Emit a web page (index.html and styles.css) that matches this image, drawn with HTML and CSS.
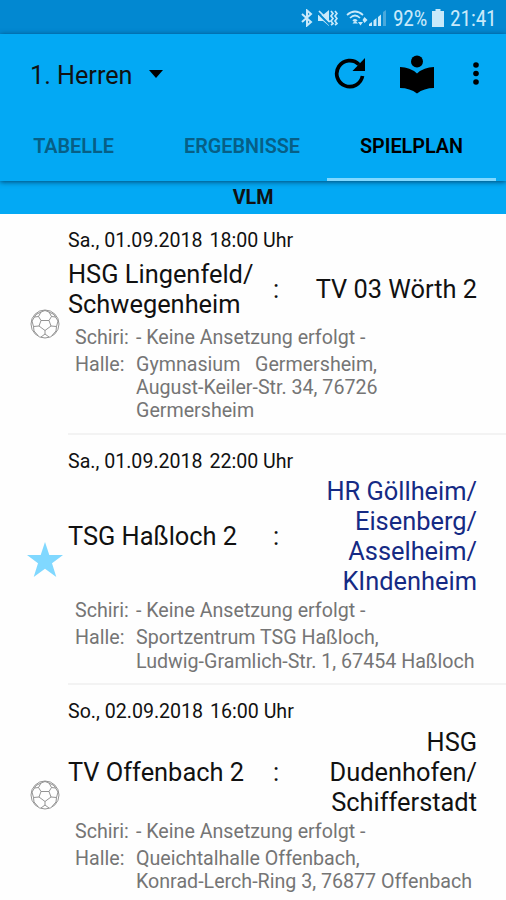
FILE: index.html
```html
<!DOCTYPE html>
<html lang="de">
<head>
  <meta charset="UTF-8" />
  <meta name="viewport" content="width=device-width, initial-scale=1.0" />
  <title>Spielplan</title>
  <link rel="stylesheet" href="styles.css">
</head>
<body>
  <!-- Shared ball icon -->
  <svg class="defs" width="0" height="0">
    <symbol id="ball" viewBox="0 0 30 30">
      <g fill="none" stroke="#888" stroke-width="0.9">
        <circle cx="15" cy="15" r="14" />
        <path d="M11 11.500H19L21 17L15 21.500L9 17Z" />
        <path d="M11 11.500L8.500 7.500L11 3L15 1.500L19 3L21.500 7.500L19 11.500M8.500 7.500L4.500 8L2 12L3.500 17.500L9 17M21.500 7.500L25.500 8L28 12L26.500 17.500L21 17M15 21.500V25L11 28M15 25L19 28M3.500 17.500L4 22L8 26.500M26.500 17.500L26 22L22 26.500M11 3L6 5.500L4.500 8M19 3L24 5.500L25.500 8" />
      </g>
    </symbol>
  </svg>

  <div class="statusbar">
    <svg class="bluetooth" width="14" height="18" viewBox="0 0 14 18">
      <path d="M2 5L11 13L7 16.500V1.500L11 5L2 13" />
    </svg>
    <svg class="mute" width="20" height="18" viewBox="0 0 20 18">
      <path class="solid" d="M0 6H5L11 1V17L5 12H0Z" />
      <path class="slash" d="M0 4L12 16" />
      <path class="line" d="M1 2L12 13M13 2L15 4.500L13 7L15 9.500L13 12L15 14.500L13 16M17 2L19 4.500L17 7L19 9.500L17 12L19 14.500L17 16" />
    </svg>
    <svg class="wifi" width="22" height="18" viewBox="0 0 22 18">
      <path class="line" d="M1 6Q9 -1 17 6M4 9Q9 4 14 9M7 12Q9 10 11 12" />
      <path class="solid" d="M9 11.500L12 14.500H6.500ZM12 13H17L14.500 16.500ZM18.500 8L21.500 11L18.500 14L16.500 11Z" />
    </svg>
    <svg class="signal" width="17" height="18" viewBox="0 0 17 18">
      <path class="solid" d="M0 15L3 13V17H0ZM4.500 11.500L7.500 9V17H4.500ZM9 8L12 5.500V17H9Z" />
      <path class="dim" d="M14 3L17 1V17H14Z" />
    </svg>
    <span class="percent">92%</span>
    <svg class="battery" width="12" height="18" viewBox="0 0 12 18">
      <path class="solid" d="M3.500 0H8.500V2H12V18H0V2H3.500Z" />
    </svg>
    <span class="clock">21:41</span>
  </div>

  <header>
    <div class="toolbar">
      <div class="team-select">
        <span>1. Herren</span>
        <svg width="14" height="8" viewBox="0 0 14 8"><path d="M0 0H14L7 8Z" /></svg>
      </div>
      <svg class="refresh" width="32" height="32" viewBox="0 0 32 32">
        <path class="arc" d="M28.500 18A13 13 0 1 1 25 6.500" />
        <path d="M31 0V13H18.500Z" />
      </svg>
      <svg class="reader" width="36" height="39" viewBox="0 0 36 39">
        <circle cx="18" cy="6.500" r="6" />
        <path d="M1 12Q11 12 18 18.500Q25 12 35 12V33Q25 33 18 38.500Q11 33 1 33Z" />
      </svg>
      <svg class="more" width="6" height="24" viewBox="0 0 6 24">
        <circle cx="3" cy="3" r="2.800" />
        <circle cx="3" cy="11.500" r="2.800" />
        <circle cx="3" cy="20" r="2.800" />
      </svg>
    </div>
    <nav class="tabs">
      <div class="tab">TABELLE</div>
      <div class="tab">ERGEBNISSE</div>
      <div class="tab active">SPIELPLAN</div>
    </nav>
  </header>

  <div class="league">VLM</div>

  <!-- List of matches -->
  <main>
    <section class="match">
      <div class="icon"><svg width="30" height="30"><use href="#ball" /></svg></div>
      <div class="info">
        <div class="date">Sa., 01.09.2018 <span>18:00 Uhr</span></div>
        <div class="teams">
          <div class="home">HSG Lingenfeld/<br>Schwegenheim</div>
          <div class="colon">:</div>
          <div class="guest">TV 03 Wörth 2</div>
        </div>
        <dl class="details">
          <dt>Schiri:</dt><dd>- Keine Ansetzung erfolgt -</dd>
          <dt>Halle:</dt><dd>Gymnasium &nbsp; Germersheim,<br>August-Keiler-Str. 34, 76726<br>Germersheim</dd>
        </dl>
      </div>
    </section>

    <section class="match">
      <div class="icon"><svg width="36" height="35" viewBox="0 0 36 35"><path class="star" d="M18 0L22.300 13H36L25 21.300L29.300 35L18 26.700L6.700 35L11 21.300L0 13H13.700Z" /></svg></div>
      <div class="info">
        <div class="date">Sa., 01.09.2018 <span>22:00 Uhr</span></div>
        <div class="teams">
          <div class="home">TSG Haßloch 2</div>
          <div class="colon">:</div>
          <div class="guest own">HR Göllheim/<br>Eisenberg/<br>Asselheim/<br>KIndenheim</div>
        </div>
        <dl class="details">
          <dt>Schiri:</dt><dd>- Keine Ansetzung erfolgt -</dd>
          <dt>Halle:</dt><dd>Sportzentrum TSG Haßloch,<br>Ludwig-Gramlich-Str. 1, 67454 Haßloch</dd>
        </dl>
      </div>
    </section>

    <section class="match">
      <div class="icon"><svg width="30" height="30"><use href="#ball" /></svg></div>
      <div class="info">
        <div class="date">So., 02.09.2018 <span>16:00 Uhr</span></div>
        <div class="teams">
          <div class="home">TV Offenbach 2</div>
          <div class="colon">:</div>
          <div class="guest">HSG<br>Dudenhofen/<br>Schifferstadt</div>
        </div>
        <dl class="details">
          <dt>Schiri:</dt><dd>- Keine Ansetzung erfolgt -</dd>
          <dt>Halle:</dt><dd>Queichtalhalle Offenbach,<br>Konrad-Lerch-Ring 3, 76877 Offenbach</dd>
        </dl>
      </div>
    </section>
  </main>
</body>
</html>
```
FILE: styles.css
```css
* {
  box-sizing: border-box;
}

body {
  margin: 0;
  height: 900px;
  overflow: hidden;
  background: #fefefe;
  color: #111;
  font-family: Roboto, sans-serif;
}

svg {
  display: block;
  flex: none;
}

.defs {
  position: absolute;
}

/* Status bar */
.statusbar {
  display: flex;
  align-items: center;
  height: 34px;
  padding: 2px 10px 0 0;
  justify-content: flex-end;
  background: #0288d1;
  color: #c8e9fa;
  font-family: "Roboto Condensed", Roboto, sans-serif;
  font-size: 21.5px;
}

.statusbar .solid {
  fill: #c8e9fa;
}

.statusbar .dim {
  fill: #49a9dc;
}

.bluetooth path,
.statusbar .line {
  fill: none;
  stroke: #c8e9fa;
  stroke-width: 1.7;
}

.bluetooth path {
  stroke-width: 2;
}

.slash {
  stroke: #0288d1;
  stroke-width: 2;
}

.mute {
  margin-left: 4px;
}

.wifi {
  margin-left: 8px;
}

.signal {
  margin-left: 1px;
}

.percent {
  margin-left: 7px;
  width: 34px;
  letter-spacing: -0.3px;
}

.battery {
  margin-left: 5px;
}

.clock {
  margin-left: 6px;
  width: 46px;
  letter-spacing: -0.2px;
}

/* App bar with tabs */
header {
  position: relative;
  height: 147px;
  background: #03a9f4;
  box-shadow: 0 1px 5px rgba(0, 30, 60, 0.7);
}

.toolbar {
  display: flex;
  align-items: center;
  height: 80px;
  padding: 0 27px 0 30px;
}

.team-select {
  display: flex;
  align-items: center;
  flex: 1;
  font-size: 25.200px;
}

.team-select span {
  padding-top: 2px;
}

.team-select svg {
  margin-left: 17px;
}

.arc {
  fill: none;
  stroke: #000;
  stroke-width: 3.7;
}

.reader {
  margin-left: 33px;
}

.more {
  margin-left: 38px;
}

.tabs {
  display: flex;
  height: 67px;
  padding: 0 10px;
}

.tab {
  width: 169px;
  padding-top: 19px;
  text-align: center;
  font-size: 19.800px;
  line-height: 28px;
  font-weight: 600;
  color: #075f86;
}

.tab:first-child {
  width: 127px;
}

.tab:nth-child(2) {
  width: 210px;
  margin-right: -20px;
}

.tab.active {
  color: #000;
  border-bottom: 3px solid #80d8ff;
}

.league {
  height: 33px;
  line-height: 34px;
  background: #03a9f4;
  text-align: center;
  font-size: 19.700px;
  font-weight: 700;
}

/* Match list */
.match {
  display: flex;
}

.icon {
  display: flex;
  align-items: center;
  justify-content: center;
  width: 68px;
  padding-left: 22px;
}

.star {
  fill: #80d8ff;
}

.info {
  flex: 1;
  padding: 15px 0 10px;
  border-bottom: 2px solid #f3f3f3;
}

.date {
  font-size: 19.600px;
  line-height: 24px;
}

.date span {
  margin-left: 2px;
}

.teams {
  display: flex;
  align-items: center;
  min-height: 67px;
  margin: 2.500px 29px 3px 0;
  font-size: 25.400px;
  line-height: 30px;
}

.home {
  width: 190px;
  white-space: nowrap;
}

.colon {
  width: 36px;
  text-align: center;
}

.guest {
  flex: 1;
  text-align: right;
}

.own {
  color: #152a84;
}

.details {
  display: grid;
  grid-template-columns: 61px 1fr;
  row-gap: 4px;
  margin: 0 0 0 7px;
  font-size: 19.650px;
  line-height: 23.300px;
  color: #757575;
}

.details dd {
  margin: 0;
  white-space: nowrap;
}
```
